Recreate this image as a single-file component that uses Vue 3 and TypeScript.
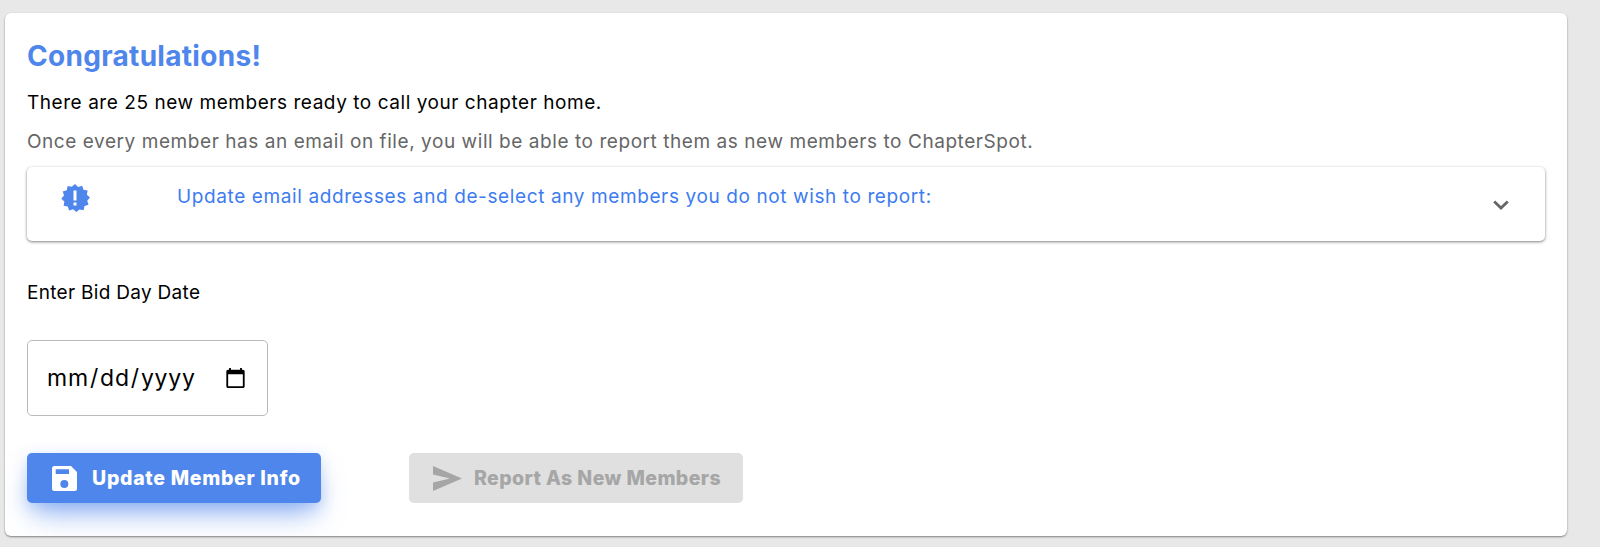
<script setup lang="ts">
const count: number = 25;
</script>

<template>
  <main class="page">
    <section class="card">
      <h1 class="title">Congratulations!</h1>
      <p class="lead">There are {{ count }} new members ready to call your chapter home.</p>
      <p class="sub">Once every member has an email on file, you will be able to report them as new members to ChapterSpot.</p>

      <div class="panel">
        <svg class="badge" viewBox="0 0 24 24" width="30" height="30" aria-hidden="true">
          <path fill="#4f86ec" d="M12 .8l2.5 2.3 3.2-1 1.1 3.2 3.3.7-.6 3.3 2.5 2.3-2.2 2.5 1 3.2-3.2 1.1-.7 3.3-3.3-.6L13 23.2l-2.5-2.2-3.2 1-1.1-3.2-3.3-.7.6-3.3L1 12.5l2.2-2.5-1-3.2 3.2-1.1.7-3.3 3.3.6z"/>
          <rect x="10.800" y="6" width="2.400" height="8" fill="#fff"/>
          <rect x="10.800" y="15.600" width="2.400" height="2.400" fill="#fff"/>
        </svg>
        <span class="panel-text">Update email addresses and de-select any members you do not wish to report:</span>
        <svg class="chevron" viewBox="0 0 16 10" width="16" height="10" aria-hidden="true">
          <path d="M1.200 1.400L8 8l6.800-6.600" fill="none" stroke="#666" stroke-width="2.800"/>
        </svg>
      </div>

      <label class="date-label" for="bid-day">Enter Bid Day Date</label>
      <input id="bid-day" class="date" type="date" />

      <div class="actions">
        <button class="btn primary" type="button">
          <svg viewBox="0 0 25 25" width="25" height="25" aria-hidden="true">
            <path fill="#fff" fill-rule="evenodd" d="M2.500 0H19l6 6v16.500a2.500 2.500 0 0 1-2.500 2.500h-20A2.500 2.500 0 0 1 0 22.500v-20A2.500 2.500 0 0 1 2.500 0zM3.700 3.300V8H17V3.300zM12.300 14a4 4 0 1 0 0 8 4 4 0 0 0 0-8z"/>
          </svg>
          <span>Update Member Info</span>
        </button>
        <button class="btn disabled" type="button" disabled>
          <svg viewBox="0 0 29 25" width="29" height="25" aria-hidden="true">
            <path fill="#a6a6a6" d="M0 0l29 12.500L0 25v-8.500l17-4-17-4z"/>
          </svg>
          <span>Report As New Members</span>
        </button>
      </div>
    </section>
  </main>
</template>

<style>
html, body {
  margin: 0;
  background: #e8e8e8;
}
</style>

<style scoped>
.page {
  height: 547px;
  box-sizing: border-box;
  padding: 13px 33px 11px 5px;
  font-family: Inter, "Noto Sans", sans-serif;
}
.card {
  height: 523px;
  box-sizing: border-box;
  padding: 24px 22px 0;
  background: #fff;
  border-radius: 6px;
  box-shadow: 0 1px 2px rgba(0, 0, 0, 0.45);
  overflow: hidden;
}
.title {
  margin: 0;
  font-size: 28px;
  line-height: 38px;
  font-weight: 700;
  letter-spacing: 0.3px;
  color: #4f86ec;
}
.lead {
  margin: 15px 0 0;
  font-size: 19px;
  line-height: 26px;
  letter-spacing: 0.55px;
  color: #000;
}
.sub {
  margin: 13px 0 0;
  font-size: 19px;
  line-height: 26px;
  letter-spacing: 0.56px;
  color: #666;
}
.panel {
  display: flex;
  align-items: flex-start;
  height: 74px;
  box-sizing: border-box;
  margin-top: 12px;
  padding: 16px 36px 0 33px;
  background: #fff;
  border-radius: 5px;
  box-shadow: 0 1px 3px rgba(0, 0, 0, 0.5);
}
.badge {
  flex: none;
}
.panel-text {
  margin: -1px 0 0 87px;
  font-size: 19px;
  line-height: 30px;
  letter-spacing: 0.61px;
  color: #3d7cf0;
}
.chevron {
  flex: none;
  margin-left: auto;
  margin-top: 17px;
}
.date-label {
  display: block;
  margin-top: 39px;
  font-size: 19px;
  line-height: 26px;
  letter-spacing: 0.3px;
  color: #000;
}
.date {
  display: block;
  width: 241px;
  height: 76px;
  box-sizing: border-box;
  margin-top: 34px;
  padding: 0 18px;
  background: #fff;
  border: 1px solid #bbb;
  border-radius: 5px;
  font-family: Inter, sans-serif;
  font-size: 23px;
  letter-spacing: 0.8px;
  color: #000;
}
.actions {
  display: flex;
  gap: 88px;
  margin-top: 37px;
}
.btn {
  display: flex;
  align-items: center;
  height: 50px;
  box-sizing: border-box;
  border: 0;
  border-radius: 5px;
  font-family: Inter, sans-serif;
  font-size: 19.5px;
  font-weight: 800;
}
.primary {
  width: 294px;
  padding: 0 0 0 25px;
  gap: 15px;
  background: #4f86ec;
  color: #fff;
  letter-spacing: 0.7px;
  box-shadow: 0 16px 28px -6px rgba(79, 134, 236, 0.6), 0 4px 14px rgba(79, 134, 236, 0.25);
}
.disabled {
  width: 334px;
  padding: 0 0 0 24px;
  gap: 12px;
  background: #e0e0e0;
  color: #a6a6a6;
  letter-spacing: 0.4px;
}
</style>
